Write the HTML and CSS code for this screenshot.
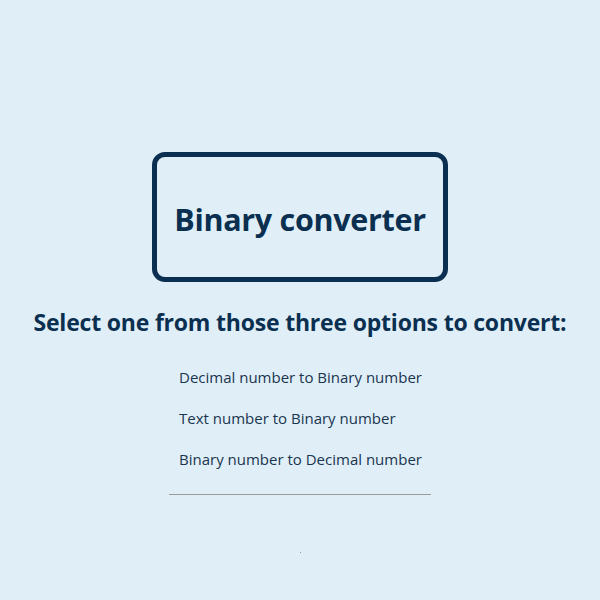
FILE: index.html
```html
<!DOCTYPE html>
<html>
<head>
<meta charset="utf-8">
<link rel="stylesheet" href="styles.css">
</head>
<body>
<main class="page">
  <div class="title-box"><h1 class="title">Binary converter</h1></div>
  <h2 class="subtitle">Select one from those three options to convert:</h2>
  <ul class="options">
    <li class="option">Decimal number to Binary number</li>
    <li class="option">Text number to Binary number</li>
    <li class="option">Binary number to Decimal number</li>
  </ul>
  <hr class="divider">
  <div class="dot"></div>
</main>
</body>
</html>
```
FILE: styles.css
```css
html, body {
  margin: 0;
  padding: 0;
  background: #e0eff7;
}
body {
  font-family: "Open Sans", "Noto Sans", sans-serif;
  color: #0b2f50;
}
.page {
  width: 600px;
  height: 600px;
  display: flex;
  flex-direction: column;
  align-items: center;
  padding-top: 152px;
  box-sizing: border-box;
}
.title-box {
  width: 296px;
  height: 130px;
  box-sizing: border-box;
  border: 5px solid #0b2f50;
  border-radius: 13px;
  display: flex;
  align-items: center;
  justify-content: center;
  padding-top: 3px;
}
.title {
  margin: 0;
  font-size: 30.5px;
  font-weight: 700;
  letter-spacing: -0.3px;
}
.subtitle {
  margin: 24px 0 0;
  font-size: 23px;
  font-weight: 700;
  letter-spacing: -0.2px;
  line-height: 32px;
}
.options {
  list-style: none;
  margin: 28px 0 0;
  padding: 0;
  width: 242px;
  display: flex;
  flex-direction: column;
  gap: 19px;
}
.option {
  font-size: 15px;
  line-height: 22px;
  color: #1a3550;
  white-space: nowrap;
}
.divider {
  width: 262px;
  margin: 24px 0 0;
  border: 0;
  border-top: 1px solid #9a9a9a;
  height: 0;
}
.dot {
  width: 1px;
  height: 1px;
  background: #9a9a9a;
  margin-top: 57px;
}
```
